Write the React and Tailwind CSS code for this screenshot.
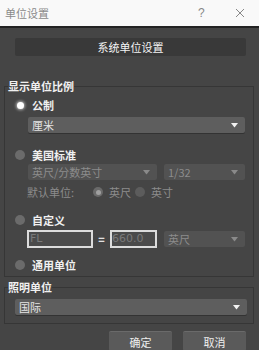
import React from 'react';

const Arrow = ({ dim }) => (
  <svg width="7" height="5" viewBox="0 0 7 5" className="shrink-0">
    <polygon points="0,0 7,0 3.5,4.5" fill={dim ? '#8a8a8a' : '#f2f2f2'} />
  </svg>
);

const Dropdown = ({ text, dim, className }) => (
  <div
    className={`h-[16px] flex items-center justify-between pl-[4px] pr-[7px] rounded-[2px] ${
      dim ? 'bg-[#525252] text-[#8c8c8c]' : 'bg-[#5e5e5e] text-[#e4e4e4] shadow-[0_1px_0_#333]'
    } ${className}`}
  >
    <span>{text}</span>
    <Arrow dim={dim} />
  </div>
);

const Radio = ({ mode }) => {
  if (mode === 'on')
    return (
      <span className="w-[10px] h-[10px] flex items-center justify-center">
        <span className="w-[7px] h-[7px] rounded-full bg-white shadow-[0_0_3px_1px_rgba(255,255,255,0.6)]" />
      </span>
    );
  if (mode === 'dimon')
    return (
      <span className="w-[10px] h-[10px] rounded-full bg-[#6a6a6a] flex items-center justify-center">
        <span className="w-[5px] h-[5px] rounded-full bg-[#a0a0a0]" />
      </span>
    );
  if (mode === 'dim') return <span className="w-[10px] h-[10px] rounded-full bg-[#5c5c5c]" />;
  return <span className="w-[10px] h-[10px] rounded-full bg-[#6b6b6b]" />;
};

const RadioRow = ({ mode, label, className }) => (
  <div className={`h-[16px] flex items-center pl-[10px] gap-[7px] ${className}`}>
    <Radio mode={mode} />
    <span className="text-[#f0f0f0] font-bold">{label}</span>
  </div>
);

export default function App() {
  return (
    <div
      className="w-[259px] h-[350px] bg-[#454545] overflow-hidden text-[11px] leading-[16px]"
      style={{ fontFamily: '"Noto Sans CJK SC", "Noto Sans", sans-serif' }}
    >
      {/* 标题栏 */}
      <div className="h-[28px] bg-[#f9f9f9] border-b-2 border-[#232323] flex items-center pl-[5px] pr-[14px] text-[#8a8a8a]">
        <span className="flex-1">单位设置</span>
        <span className="w-[8px] text-[#888] text-[12px]" style={{ fontFamily: '"Liberation Sans", sans-serif' }}>?</span>
        <svg width="10" height="10" viewBox="0 0 10 10" className="ml-[29px]">
          <path d="M1 1 L9 9 M9 1 L1 9" stroke="#888" strokeWidth="1" />
        </svg>
      </div>

      <div className="mt-[10px] mx-[15px] w-[231px] h-[18px] bg-[#393939] rounded-[2px] flex items-center justify-center text-[#f4f4f4]">
        系统单位设置
      </div>

      <fieldset className="mt-[22px] ml-[4px] w-[250px] border border-[#363636] pb-[3px]">
        <legend className="ml-[3px] text-[#f0f0f0] font-bold">显示单位比例</legend>

        <RadioRow mode="on" label="公制" className="mt-[3px]" />
        <Dropdown text="厘米" className="mt-[4px] ml-[23px] mr-[8px]" />

        <RadioRow mode="off" label="美国标准" className="mt-[14px]" />
        <div className="mt-[1px] ml-[23px] mr-[8px] flex gap-[7px]">
          <Dropdown text="英尺/分数英寸" dim className="w-[129px]" />
          <Dropdown text="1/32" dim className="flex-1" />
        </div>

        <div className="mt-[4px] h-[16px] ml-[22px] flex items-center text-[#8c8c8c]">
          <span className="w-[66px]">默认单位:</span>
          <Radio mode="dimon" />
          <span className="ml-[6px] w-[26px]">英尺</span>
          <Radio mode="dim" />
          <span className="ml-[6px]">英寸</span>
        </div>

        <RadioRow mode="off" label="自定义" className="mt-[12px]" />
        <div className="mt-[2px] ml-[22px] mr-[8px] flex items-center">
          <div className="w-[66px] h-[18px] border-2 border-[#dcdcdc] bg-[#4b4b4b] text-[#7a7a7a] pl-[1px] flex items-center" style={{ fontFamily: '"DejaVu Sans", sans-serif' }}>
            FL
          </div>
          <span className="w-[17px] text-center text-[#e0e0e0] font-bold">=</span>
          <div className="w-[47px] h-[18px] border-2 border-[#dcdcdc] bg-[#4b4b4b] text-[#7a7a7a] flex items-center" style={{ fontFamily: '"DejaVu Sans", sans-serif' }}>
            660.0
          </div>
          <Dropdown text="英尺" dim className="ml-[7px] flex-1" />
        </div>

        <RadioRow mode="off" label="通用单位" className="mt-[9px]" />
      </fieldset>

      <fieldset className="mt-[2px] ml-[4px] w-[250px] border border-[#363636] pb-[8px]">
        <legend className="ml-[3px] text-[#f0f0f0] font-bold">照明单位</legend>
        <Dropdown text="国际" className="mt-[4px] ml-[10px] mr-[6px]" />
      </fieldset>

      <div className="mt-[7px] flex justify-end gap-[11px] pr-[13px]">
        <button className="w-[63px] h-[20px] bg-[#5a5a5a] rounded-[2px] text-[#eee] border-t border-[#6a6a6a]">确定</button>
        <button className="w-[63px] h-[20px] bg-[#5a5a5a] rounded-[2px] text-[#eee] border-t border-[#6a6a6a]">取消</button>
      </div>
    </div>
  );
}
